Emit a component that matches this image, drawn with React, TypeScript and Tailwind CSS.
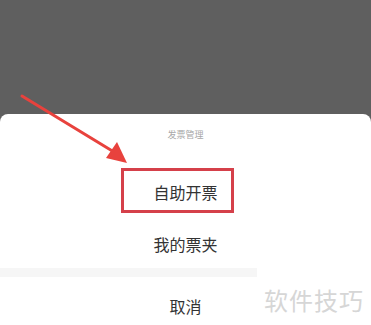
import React from "react";

export default function App() {
  const cjk = { fontFamily: '"Noto Sans CJK SC", "Noto Sans", sans-serif' };
  return (
    <div className="relative w-[371px] h-[325px] overflow-hidden bg-[#5f5f5f]" style={cjk}>
      <div className="h-[114px]" />
      <div className="flex flex-col bg-white rounded-t-[8px]">
        <div className="h-[50px] flex justify-center pt-[15px]">
          <span className="text-[9px] leading-[12px] text-[#a8a8a8]">发票管理</span>
        </div>
        <div className="h-[56px] flex items-center justify-center text-[16px] text-[#333333]">自助开票</div>
        <div className="h-[48px] flex items-center justify-center text-[16px] text-[#333333]">我的票夹</div>
        <div className="h-[9px] bg-[#f6f6f6]" />
        <div className="h-[58px] flex items-center justify-center text-[16px] text-[#333333]">取消</div>
      </div>

      {/* annotation box */}
      <div className="absolute left-[121px] top-[168px] w-[113px] h-[45px] border-[3px] border-[#d5404a]" />

      {/* watermark */}
      <div className="absolute left-[257px] top-[266px] w-[114px] h-[59px] bg-white flex items-center justify-center">
        <span className="text-[24px] text-[#d6d6d6] tracking-[1px] mt-[8px]">软件技巧</span>
      </div>

      {/* arrow */}
      <svg className="absolute left-0 top-0" width="371" height="325" viewBox="0 0 371 325">
        <line x1="22" y1="96" x2="114" y2="152" stroke="#e8423d" strokeWidth="3" strokeLinecap="round" />
        <polygon points="127,163 106,158 117,142" fill="#e8423d" />
      </svg>
    </div>
  );
}
